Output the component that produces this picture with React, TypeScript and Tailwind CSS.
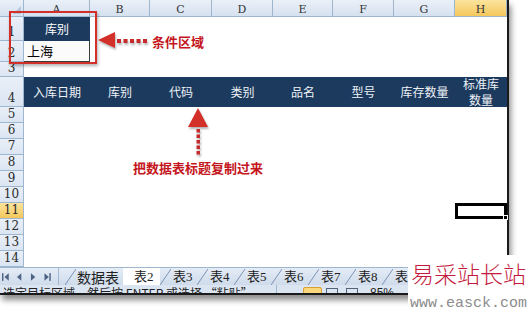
import React from 'react';

const CJK = "font-['Noto_Sans_CJK_SC',sans-serif]";
const cols = ['A', 'B', 'C', 'D', 'E', 'F', 'G', 'H'];
const headers = ['入库日期', '库别', '代码', '类别', '品名', '型号', '库存数量'];
const sheets = ['表3', '表4', '表5', '表6', '表7', '表8', '表'];

function RowNo({ n, active = false }: { n: number; active?: boolean }) {
  return (
    <div
      className={`flex items-end justify-center pb-[2px] border-r border-b border-[#9eb6ce] text-[12px] leading-none font-['DejaVu_Serif',serif] text-[#2b2b2b] ${
        active ? 'bg-linear-to-b from-[#fbe49c] to-[#f5c75a]' : 'bg-linear-to-b from-[#e9eff8] to-[#dbe5f2]'
      }`}
    >
      {n}
    </div>
  );
}

function Slash() {
  return (
    <svg width="11" height="17" viewBox="0 0 11 17" className="shrink-0">
      <line x1="0" y1="17" x2="11" y2="1" stroke="#7d93b4" strokeWidth="1" />
    </svg>
  );
}

export default function App() {
  return (
    <div className={`relative w-[529px] h-[316px] overflow-hidden bg-white ${CJK}`}>
      {/* sheet window */}
      <div className="w-[509px] border-r-2 border-b-2 border-[#1a1a1a] shadow-[2px_5px_6px_rgba(0,0,0,0.45)]">
        <div className="grid grid-cols-[24px_66px_60px_62px_61px_60px_61px_61px_52px] grid-rows-[17px_24px_21px_15px_30px_repeat(10,16px)]">
          {/* column header */}
          <div className="relative border-r border-b border-[#9eb6ce] bg-linear-to-b from-[#eaf0f8] to-[#d6e1f0]">
            <svg width="8" height="8" className="absolute right-[2px] bottom-[2px]">
              <polygon points="8,0 8,8 0,8" fill="#b5c6dc" />
            </svg>
          </div>
          {cols.map((c) => (
            <div
              key={c}
              className={`flex items-end justify-center pb-[1px] border-r border-b border-[#9eb6ce] text-[11px] leading-none font-['DejaVu_Serif',serif] text-[#333] ${
                c === 'H' ? 'bg-linear-to-b from-[#fbe49c] to-[#f5c75a]' : 'bg-linear-to-b from-[#eaf0f8] to-[#d6e1f0]'
              }`}
            >
              {c}
            </div>
          ))}

          {/* row 1 */}
          <RowNo n={1} />
          <div className="flex items-center justify-center bg-[#1c3a5e] text-white text-[12px]">库别</div>
          {cols.slice(1).map((c) => (
            <div key={c} />
          ))}

          {/* row 2 */}
          <RowNo n={2} />
          <div className="flex items-center pl-[3px] bg-[#fbfbfb] border-r border-b border-[#3a3a3a] text-[13px] text-black">上海</div>
          {cols.slice(1).map((c) => (
            <div key={c} />
          ))}

          {/* row 3 */}
          <RowNo n={3} />
          {cols.map((c) => (
            <div key={c} />
          ))}

          {/* row 4 - copied titles */}
          <RowNo n={4} />
          {headers.map((h) => (
            <div key={h} className="flex items-center justify-center bg-[#1c3a5e] text-[#eef2f7] text-[12px]">
              {h}
            </div>
          ))}
          <div className="flex flex-col items-center bg-[#1c3a5e] text-[#eef2f7] text-[12px] leading-[16px]">
            <span className="-mt-[1px]">标准库</span>
            <span>数量</span>
          </div>

          {/* rows 5-14 */}
          {[5, 6, 7, 8, 9, 10, 11, 12, 13, 14].map((n) => (
            <React.Fragment key={n}>
              <RowNo n={n} active={n === 11} />
              {cols.map((c) =>
                n === 11 && c === 'H' ? (
                  <div key={c} className="relative border-[3px] border-black">
                    <span className="absolute -right-[4px] -bottom-[4px] w-[5px] h-[5px] bg-black border border-white" />
                  </div>
                ) : (
                  <div key={c} />
                )
              )}
            </React.Fragment>
          ))}
        </div>

        {/* sheet tabs */}
        <div className="h-[18px] flex items-stretch bg-linear-to-b from-[#e4ecf6] to-[#cfdbeb] border-t border-[#9eb6ce] text-[#222]">
          <div className="w-[59px] shrink-0 flex items-center border-r border-[#9eb6ce] pl-[2px]">
            <svg width="58" height="10" viewBox="0 0 58 10">
              <rect x="0" y="1" width="1.5" height="8" fill="#4f6384" />
              <polygon points="7,1 7,9 2.5,5" fill="#4f6384" />
              <polygon points="20,1 20,9 15.5,5" fill="#4f6384" />
              <polygon points="30,1 30,9 34.5,5" fill="#4f6384" />
              <polygon points="44,1 44,9 48.5,5" fill="#4f6384" />
              <rect x="49" y="1" width="1.5" height="8" fill="#4f6384" />
            </svg>
          </div>
          <div className="w-[6px] shrink-0" />
          <Slash />
          <div className="flex items-center pl-[1px] w-[47px] shrink-0 text-[14px] leading-[14px]">数据表</div>
          <div className="flex items-center w-[37px] shrink-0 bg-white pl-[11px] text-[13px] leading-none font-['Liberation_Serif','Noto_Sans_CJK_SC',serif] whitespace-nowrap">
            表2
          </div>
          {sheets.map((s) => (
            <div key={s} className="flex items-stretch shrink-0">
              <Slash />
              <div className="flex items-center w-[20px] ml-[2px] mr-[4px] text-[13px] leading-none font-['Liberation_Serif','Noto_Sans_CJK_SC',serif] whitespace-nowrap">
                {s}
              </div>
            </div>
          ))}
        </div>

        {/* status bar */}
        <div className="h-[8px] overflow-hidden flex items-start bg-[#dbe5f2] text-[12px] leading-[12px] text-[#222]">
          <div className="w-[276px] shrink-0 pl-[3px] pt-[2px] whitespace-nowrap">选定目标区域，然后按 ENTER 或选择 “粘贴”</div>
          <div className="w-px h-[8px] bg-[#9eb6ce] shrink-0" />
          <div className="ml-[26px] w-[19px] h-[14px] mt-[2px] rounded-[2px] border border-[#d9a036] bg-[#fbd77c] shrink-0" />
          <div className="ml-[4px] w-[12px] h-[10px] mt-[3px] border border-[#55627a] shrink-0" />
          <div className="ml-[8px] w-[12px] h-[10px] mt-[3px] border border-[#55627a] shrink-0" />
          <div className="ml-[12px] pt-[2px] font-['Liberation_Sans',sans-serif] text-[12px] whitespace-nowrap">85%</div>
        </div>
      </div>

      {/* annotation: condition area */}
      <div className="absolute left-[9px] top-[11px] w-[88px] h-[53px] border-2 border-[#d3302a] shadow-[1px_2px_3px_rgba(0,0,0,0.3)]" />
      <svg width="56" height="22" viewBox="0 0 56 22" className="absolute left-[97px] top-[30px] drop-shadow-[1px_2px_1px_rgba(0,0,0,0.3)]">
        <polygon points="1,10 18,2 18,18" fill="#d3302a" />
        {[20, 26.5, 33, 39.5, 46].map((x) => (
          <rect key={x} x={x} y="9" width="4" height="4" fill="#c62a2a" />
        ))}
      </svg>
      <div className="absolute left-[152px] top-[34px] text-[13px] leading-[16px] font-bold text-[#c4161c]">条件区域</div>

      {/* annotation: copy titles */}
      <svg width="24" height="52" viewBox="0 0 24 52" className="absolute left-[186px] top-[106px] drop-shadow-[1px_2px_1px_rgba(0,0,0,0.3)]">
        <polygon points="12,2 2,21 22,21" fill="#d3302a" />
        {[23, 28.5, 34, 39.5, 45].map((y) => (
          <rect key={y} x="10.5" y={y} width="3.5" height="3.5" fill="#c62a2a" />
        ))}
      </svg>
      <div className="absolute left-[133px] top-[160px] text-[13px] leading-[16px] font-bold text-[#c4161c] whitespace-nowrap">把数据表标题复制过来</div>

      {/* watermark */}
      <div className="absolute left-[408px] top-[255px] w-[121px] h-[61px] bg-white pl-[3px] pt-[6px]">
        <div className="text-[23px] leading-[24px] font-light text-[#c41a3d] whitespace-nowrap">易采站长站</div>
        <div className="mt-[11px] text-[15px] leading-[15px] text-[#8c8c8c] font-['Liberation_Mono',monospace] whitespace-nowrap -ml-[1px]">www.easck.com</div>
      </div>
    </div>
  );
}
